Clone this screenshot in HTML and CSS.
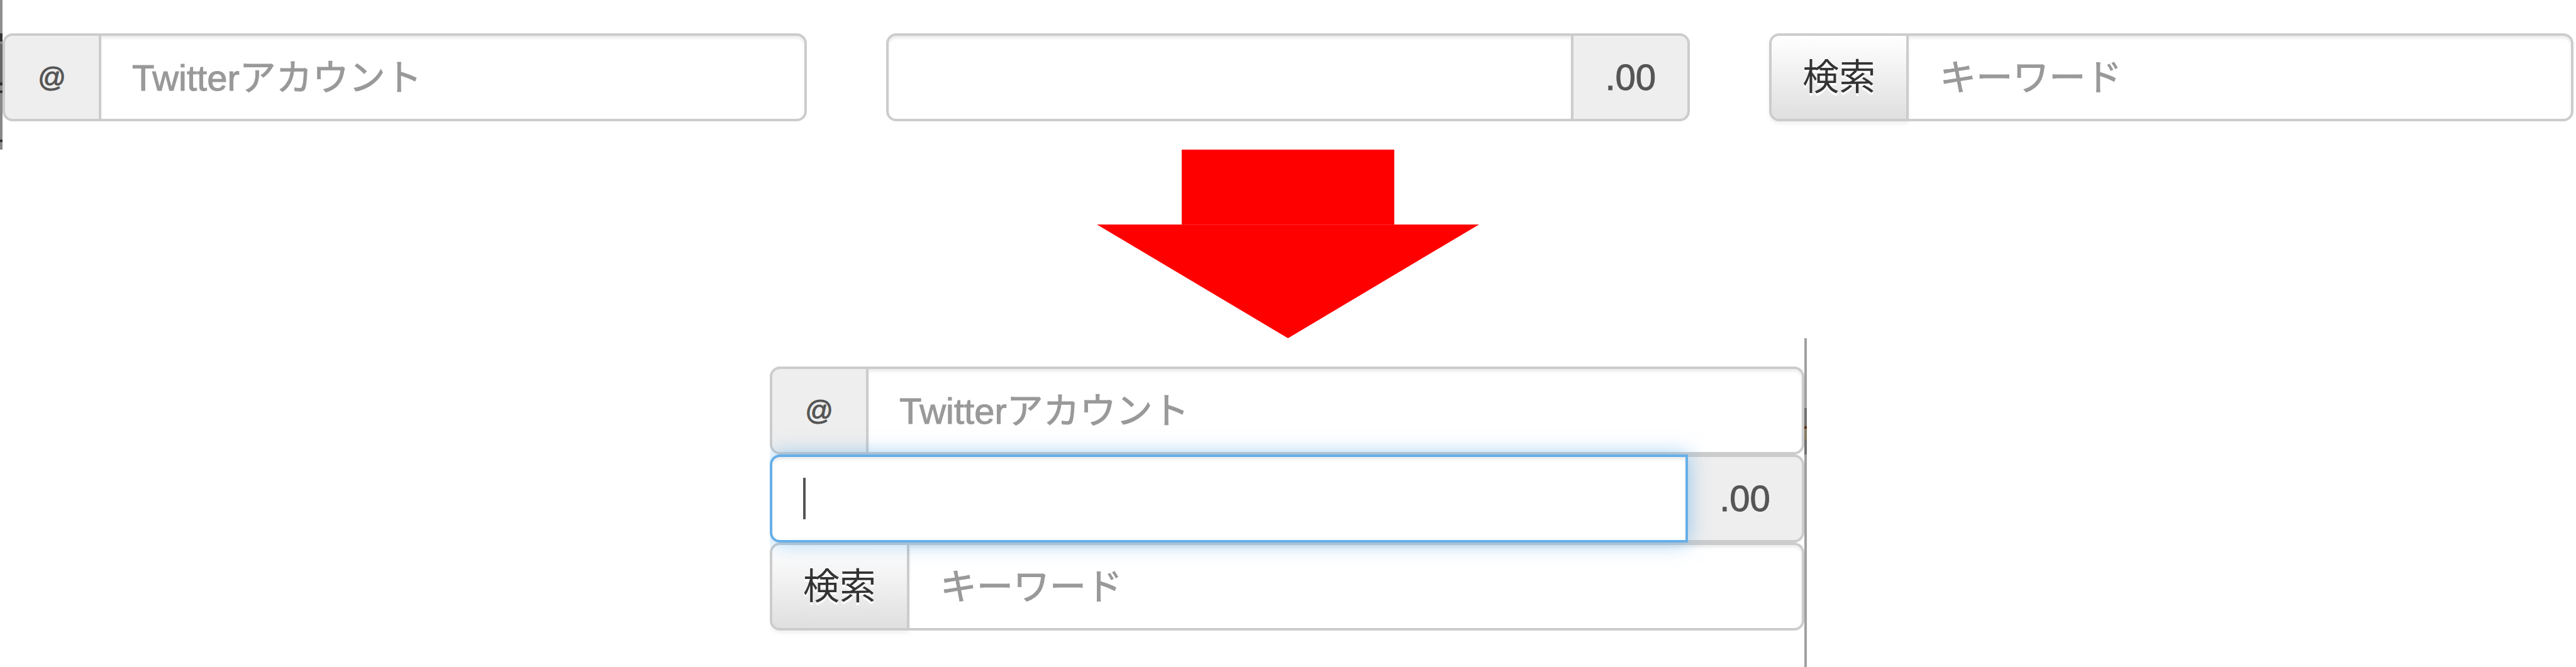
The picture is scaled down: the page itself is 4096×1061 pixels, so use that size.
FILE: index.html
```html
<!DOCTYPE html>
<html lang="ja">
<head>
<meta charset="utf-8">
<title>Input groups</title>
<link rel="stylesheet" href="styles.css">
</head>
<body>
<header class="wide">
  <div class="edge edge-left"></div>
  <form class="columns">
    <div class="group">
      <label class="addon addon-start" for="account-wide">@</label>
      <input class="field field-end" id="account-wide" type="text" placeholder="Twitterアカウント">
    </div>
    <div class="group">
      <input class="field field-start" id="amount-wide" type="text">
      <label class="addon addon-end" for="amount-wide">.00</label>
    </div>
    <div class="group">
      <button class="button" type="button">検索</button>
      <input class="field field-end" type="text" placeholder="キーワード" aria-label="キーワード">
    </div>
  </form>
</header>
<svg class="arrow" viewBox="0 0 608 300" aria-hidden="true">
  <path d="M135 0H473V119H608L304 300L0 119H135Z" fill="#f00"/>
  <path d="M0 119.5H608" stroke="#fff" stroke-opacity=".15"/>
</svg>
<main class="narrow">
  <form class="stack">
    <div class="group">
      <label class="addon addon-start" for="account-narrow">@</label>
      <input class="field field-end" id="account-narrow" type="text" placeholder="Twitterアカウント">
    </div>
    <div class="group group-focus">
      <input class="field field-start field-focus" id="amount-narrow" type="text">
      <span class="caret"></span>
      <label class="addon addon-end" for="amount-narrow">.00</label>
    </div>
    <div class="group">
      <button class="button" type="button">検索</button>
      <input class="field field-end" type="text" placeholder="キーワード" aria-label="キーワード">
    </div>
  </form>
  <div class="edge edge-right"></div>
</main>
</body>
</html>
```
FILE: styles.css
```css
* { box-sizing: border-box; }

body {
  margin: 0;
  background: #fff;
  color: #555;
  font: 58px/82px "Liberation Sans", "Noto Sans CJK JP", sans-serif;
}

.wide { display: flex; }

.columns {
  flex: 1;
  display: grid;
  grid-template-columns: repeat(3, minmax(0, 1fr));
  gap: 126px;
  padding: 53px 4px 45px 0;
}

.arrow {
  display: block;
  width: 608px;
  margin: 0 auto;
}

.narrow {
  display: grid;
  grid-template-columns: 1224fr 1645fr 4px 1223fr;
}

.stack {
  grid-column: 2;
  overflow: hidden;
  padding: 45px 0 58px;
}

/* Input groups */
.group { display: flex; }
.group-focus { position: relative; }

.field,
.addon,
.button {
  height: 140px;
  margin: 0;
  border: 4px solid #ccc;
  padding: 0 49px;
  font: inherit;
}

.field {
  flex: 1;
  min-width: 0;
  color: #555;
  background: #fff;
  box-shadow: inset 0 4px 4px rgba(0, 0, 0, .075);
  outline: 0;
}
.field::placeholder { color: #999; opacity: 1; -webkit-text-stroke: 1px #999; }
.field-start { border-radius: 16px 0 0 16px; }
.field-end { border-radius: 0 16px 16px 0; }

.field-focus {
  position: relative;
  z-index: 1;
  border-color: #66afe9;
  box-shadow: inset 0 4px 4px rgba(0, 0, 0, .075), 0 0 33px rgba(82, 168, 236, .6);
}

.addon {
  flex: none;
  display: flex;
  align-items: center;
  justify-content: center;
  background: #eee;
  -webkit-text-stroke: 1px #555;
}
.addon-start {
  width: 157px;
  margin-right: -4px;
  border-radius: 16px 0 0 16px;
  font-size: 44px;
}
.addon-end {
  width: 189px;
  margin-left: -4px;
  border-radius: 0 16px 16px 0;
}

.button {
  flex: none;
  margin-right: -4px;
  border-radius: 16px 0 0 16px;
  color: #333;
  background: linear-gradient(#fff, #dfdfdf) padding-box;
  box-shadow: 0 4px 6px rgba(0, 0, 0, .06);
  text-shadow: 0 4px 0 #fff;
}

.caret {
  position: absolute;
  z-index: 2;
  top: 37px;
  left: 53px;
  width: 4px;
  height: 66px;
  background: #555;
}

/* Page edges */
.edge { width: 4px; }
.edge-left {
  background: linear-gradient(
    #8e8e8e 53px, #333 53px 66px, #888 66px 70px, #686868 70px 131px,
    #333 131px 136px, #888 136px 144px, #333 144px 148px, #888 148px 222px,
    #333 222px 226px, #888 226px);
}
.edge-right {
  background: linear-gradient(
    #a0a0a0 111px, #707070 111px 140px, #5a3010 140px 144px,
    #857a60 144px 161px, #707070 161px 185px, #a0a0a0 185px);
}
```
